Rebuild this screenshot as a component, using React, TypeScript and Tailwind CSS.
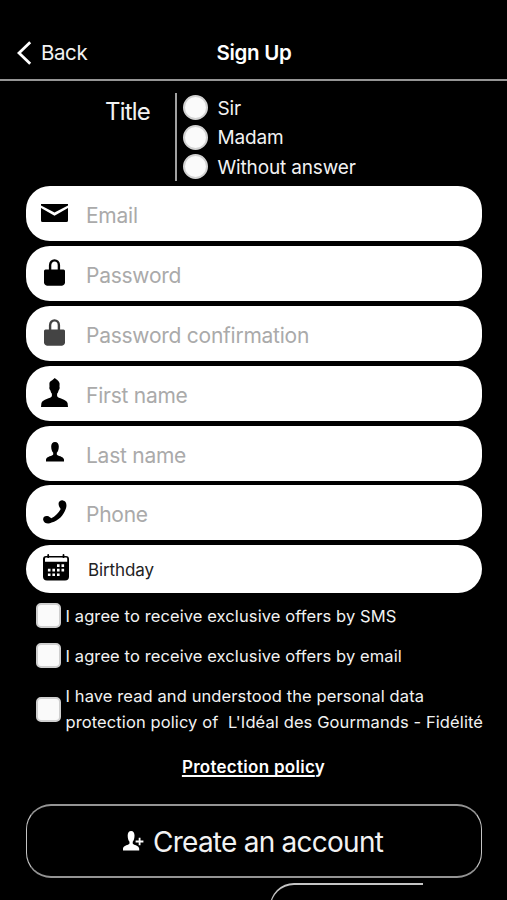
import React from 'react';

interface FieldProps {
  icon: React.ReactNode;
  placeholder: string;
}

const PERSON_PATH =
  'M13.8 0 C14.2 0.9 17.8 2 18.6 5.5 L18.5 9 C19 9.6 18.6 11.4 17.6 12.4 C17.2 14 16.7 15 16.1 15.6 L16.1 18 C16.8 20.6 25.6 21 26.6 25.2 L27 29 L0 29 L0.4 25.2 C1.4 21 10.2 20.6 10.9 18 L10.9 15.6 C10.3 15 9.8 14 9.4 12.4 C8.4 11.4 8 9.6 8.5 9 L8.4 5.5 C8.8 2.8 11.5 2.6 13.8 0 Z';

const SMALL_PERSON_PATH =
  'M9 0 C11.5 0 12.8 1.8 12.8 4.5 C12.8 7.5 12 9.5 10.8 10.8 L10.8 12.5 C11.3 14 17.6 14.3 18 17.5 L18 19.5 L0 19.5 L0 17.5 C0.4 14.3 6.7 14 7.2 12.5 L7.2 10.8 C6 9.5 5.2 7.5 5.2 4.5 C5.2 1.8 6.5 0 9 0 Z';

const EnvelopeIcon = () => (
  <svg width="27" height="18" viewBox="0 0 27 18">
    <path d="M0 0 H27 V1.4 L13.5 8.6 L0 1.4 Z" />
    <path d="M0 4 L13.5 11.8 L27 4 V16.5 Q27 18 25.5 18 H1.5 Q0 18 0 16.5 Z" />
  </svg>
);

const LockIcon = ({ className = 'text-black' }: { className?: string }) => (
  <svg width="21" height="27" viewBox="0 0 21 27" fill="currentColor" className={className}>
    <path d="M6.1 12 V6.2 C6.1 -0.3 14.9 -0.3 14.9 6.2 V12" fill="none" stroke="currentColor" strokeWidth="2.4" />
    <path d="M1.5 10.5 H19.5 Q21 10.5 21 12 V23.5 C21 26 19 26.8 16 26.8 H5 C2 26.8 0 26 0 23.5 V12 Q0 10.5 1.5 10.5 Z" />
  </svg>
);

const PersonIcon = () => (
  <svg width="27" height="29" viewBox="0 0 27 29">
    <path d={PERSON_PATH} />
  </svg>
);

const SmallPersonIcon = () => (
  <svg width="18" height="20" viewBox="0 0 18 20">
    <path d={SMALL_PERSON_PATH} />
  </svg>
);

const PhoneIcon = () => (
  <svg width="24" height="24" viewBox="0 0 24 24">
    <path d="M15.6 4.3 C15.2 1.6 17.6 0 19.9 0.4 C23.2 0.8 24.2 4.2 22.9 8.6 C20.6 15.4 15.6 20.9 8.6 22.6 C5.2 24.4 1 23.4 0.2 19.9 C-0.3 17.2 1.9 15.6 4.3 16 C6.2 16.2 7 17.4 8.2 18.3 C12 16.4 15.4 13 17.7 8.9 C16.8 7.7 15.8 6.5 15.6 4.3 Z" />
  </svg>
);

const CalendarIcon = () => (
  <svg width="26" height="27" viewBox="0 0 26 27">
    <path d="M3 2 H23 Q26 2 26 5 V22.5 Q26 26.5 22 26.5 H4 Q0 26.5 0 22.5 V5 Q0 2 3 2 Z" />
    <path d="M2 4.8 Q2 3.6 3 3.6 H23 Q24.2 3.6 24.2 4.8 V7.8 H2 Z" fill="#fff" />
    <path d="M5.2 1 V3.2 M20.5 1 V3.2" stroke="#000" strokeWidth="1.8" strokeLinecap="round" />
    <g fill="#fff">
      <path d="M14 10.3h2.6v2.6H14zM18.5 10.3h2.6v2.6h-2.6z" />
      <path d="M4.9 14.8h2.6v2.6H4.9zM9.4 14.8H12v2.6H9.4zM14 14.8h2.6v2.6H14zM18.5 14.8h2.6v2.6h-2.6z" />
      <path d="M4.9 19.5h2.6v2.6H4.9zM9.4 19.5H12v2.6H9.4zM14 19.5h2.6v2.6H14z" />
    </g>
  </svg>
);

const Field: React.FC<FieldProps> = ({ icon, placeholder }) => (
  <div className="flex h-[55px] items-center rounded-[24px] bg-white">
    <div className="flex w-[57px] shrink-0 justify-center pb-[2px]">{icon}</div>
    <span className="ml-[3px] mt-[5px] whitespace-nowrap text-[21px] leading-6 tracking-[-0.25px] text-[#aaaaaa]">
      {placeholder}
    </span>
  </div>
);

const Radio = ({ label }: { label: string }) => (
  <div className="flex h-[29.5px] items-center">
    <span className="size-[25px] rounded-full border-2 border-[#d2d2d2] bg-[#fafafa]" />
    <span className="ml-[9.5px] mt-[2px] whitespace-nowrap text-[19px] leading-6 tracking-[-0.15px]">{label}</span>
  </div>
);

const Checkbox = () => (
  <span className="size-[25px] shrink-0 rounded-[5px] border-2 border-[#cfcfcf] bg-[#fafafa]" />
);

export default function App() {
  return (
    <div className="h-[900px] w-[507px] overflow-hidden bg-black font-['Inter',sans-serif] text-[#f2f2f2]">
      <header className="grid h-[81px] grid-cols-[1fr_auto_1fr] items-end border-b-2 border-[#959595] pb-[14px]">
        <div className="flex items-center pl-[16.5px]">
          <svg width="15" height="24" viewBox="0 0 15 24" fill="none" stroke="#fff" strokeWidth="2.8">
            <path d="M13.2 1.2 L2 12 L13.2 22.8" />
          </svg>
          <span className="ml-[9.5px] text-[20.5px] leading-6 tracking-[-0.4px]">Back</span>
        </div>
        <h1 className="pl-px text-[20.5px] font-semibold leading-6 tracking-[-0.3px] text-white">Sign Up</h1>
        <span />
      </header>

      <section className="flex h-[105px] pt-3">
        <div className="w-[175px] shrink-0 pl-[105px] pt-[4px] text-[24px] leading-[30px] tracking-[-0.8px]">Title</div>
        <div className="h-[88px] border-l-2 border-[#a0a0a0] pl-[6px]">
          <Radio label="Sir" />
          <Radio label="Madam" />
          <Radio label="Without answer" />
        </div>
      </section>

      <form className="ml-[26px] flex w-[456px] flex-col gap-[4.9px]">
        <Field icon={<EnvelopeIcon />} placeholder="Email" />
        <Field icon={<LockIcon />} placeholder="Password" />
        <Field icon={<LockIcon className="text-[#444]" />} placeholder="Password confirmation" />
        <Field icon={<PersonIcon />} placeholder="First name" />
        <Field icon={<SmallPersonIcon />} placeholder="Last name" />
        <Field icon={<PhoneIcon />} placeholder="Phone" />
        <div className="flex h-12 items-center rounded-[24px] bg-white">
          <div className="flex w-[60px] shrink-0 justify-center pb-[3px]">
            <CalendarIcon />
          </div>
          <span className="ml-[2px] mt-px text-[17px] leading-6 tracking-[-0.1px] text-[#222]">Birthday</span>
        </div>
      </form>

      <section className="pl-[35.5px] text-[16.5px] leading-[26px] tracking-[0.1px]">
        <div className="mt-[10px] flex h-[25px] items-center">
          <Checkbox />
          <span className="ml-[5px] whitespace-nowrap">I agree to receive exclusive offers by SMS</span>
        </div>
        <div className="mt-[15px] flex h-[25px] items-center">
          <Checkbox />
          <span className="ml-[5px] whitespace-nowrap">I agree to receive exclusive offers by email</span>
        </div>
        <div className="mt-[15px] flex h-[52px] items-center">
          <Checkbox />
          <p className="ml-[5px] whitespace-pre">
            I have read and understood the personal data
            <br />
            protection policy of{'  '}L'Idéal des Gourmands - Fidélité
          </p>
        </div>
      </section>

      <div className="mt-[19px] text-center text-[17px] font-semibold leading-[26px] tracking-[0.28px] text-white">
        <a>
          <span className="underline decoration-[1.5px] underline-offset-2 [text-decoration-skip-ink:none]">
            Protection polic
          </span>
          y
        </a>
      </div>

      <button
        type="button"
        className="ml-[26px] mt-[24px] flex h-[74px] w-[456px] items-center rounded-[25px] border-x border-y-2 border-x-[#c4c4c4] border-y-[#949494] pl-[96px]"
      >
        <svg width="21" height="20" viewBox="0 0 21 20" fill="#fff">
          <path d={SMALL_PERSON_PATH} transform="scale(0.9 1)" />
          <path d="M12.8 10.5 H20.4 M16.6 6.7 V14.3" stroke="#000" strokeWidth="4" />
          <path d="M12.6 10.5 H20.4 M16.6 6.7 V14.3" stroke="#fff" strokeWidth="1.8" />
        </svg>
        <span className="ml-[9px] mt-[2px] whitespace-nowrap text-[28px] leading-9 tracking-[-0.75px]">
          Create an account
        </span>
      </button>

      <div className="ml-[270px] mt-[5px] h-12 w-[153px] rounded-tl-[24px] border-l border-t-2 border-[#c4c4c4]" />
    </div>
  );
}
